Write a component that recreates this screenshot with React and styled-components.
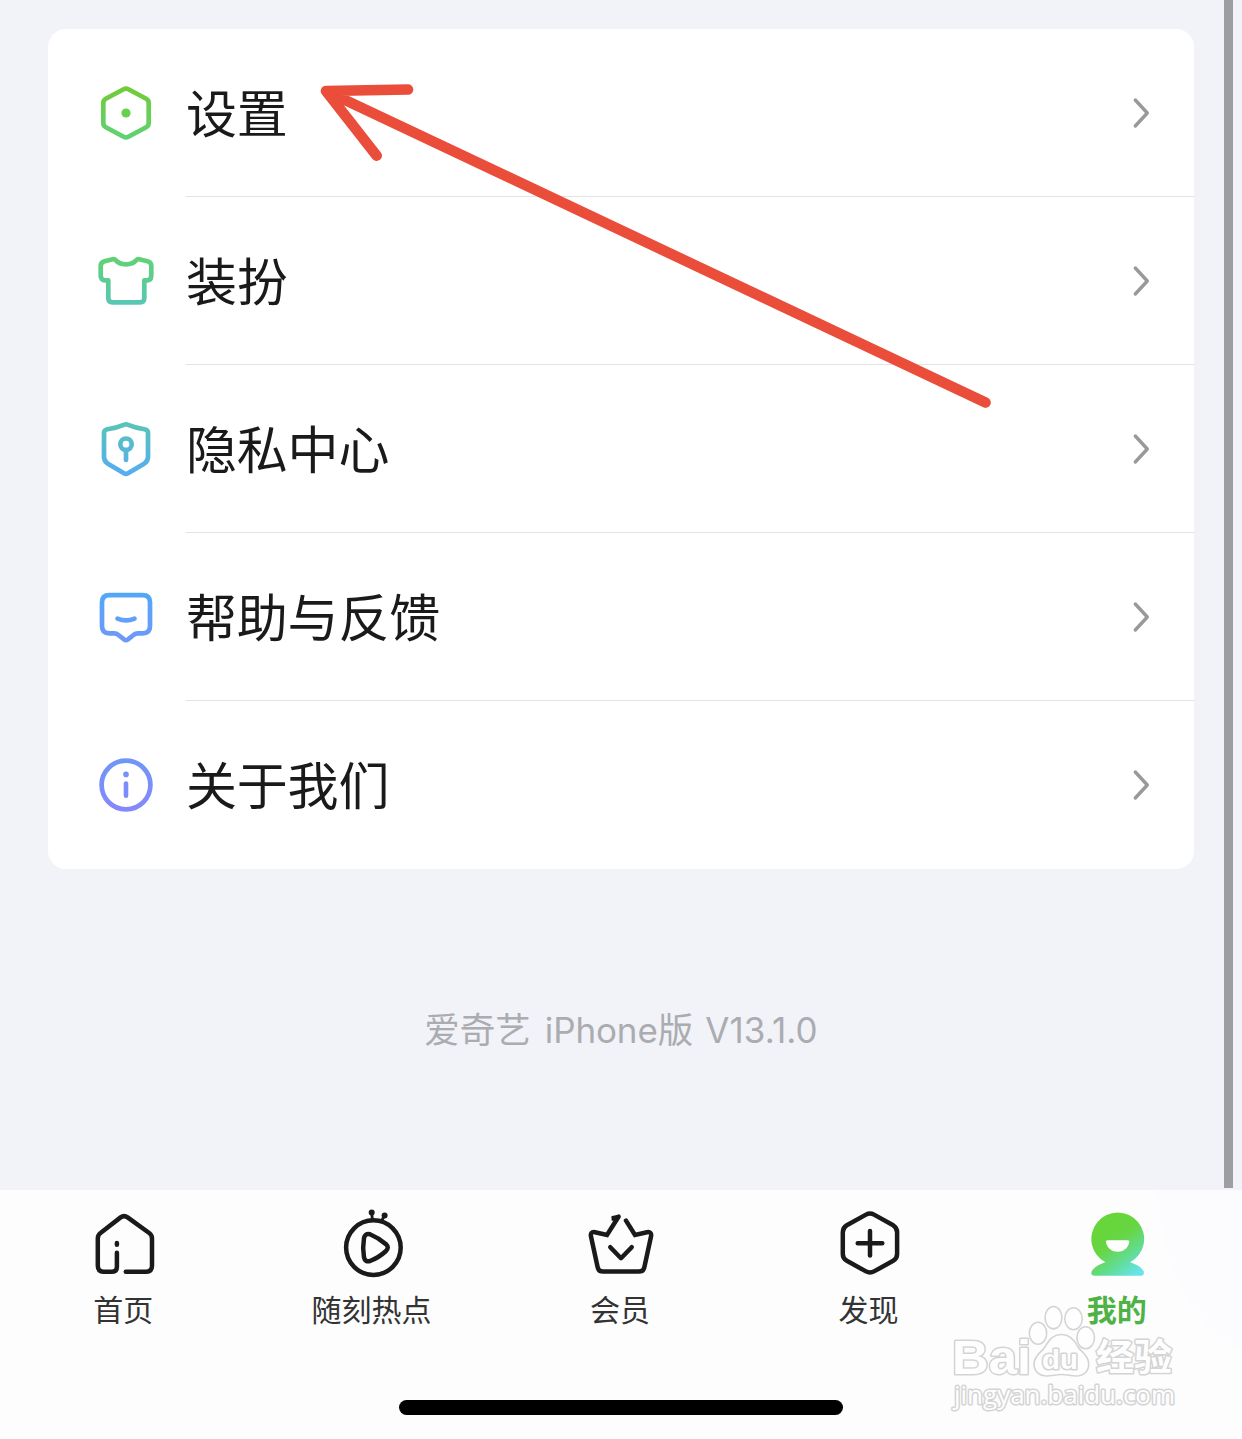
import styled, { createGlobalStyle } from 'styled-components'

export default function App() {
  return (
    <>
      <GlobalStyle />
      <Screen>
        <Content>
          <Card>
            {menuArray.map(({ label, icon, from, to }, index) => (
              <MenuRow key={label}>
                <MenuIcon viewBox='0 0 60 60'>
                  <defs>
                    <linearGradient id={`menu${index}`} gradientUnits='userSpaceOnUse' x1='0' y1='5' x2='0' y2='55'>
                      <stop offset='0' stopColor={from} />
                      <stop offset='1' stopColor={to} />
                    </linearGradient>
                  </defs>
                  <g stroke={`url(#menu${index})`}>{icon}</g>
                </MenuIcon>
                <MenuBody $last={index === menuArray.length - 1}>
                  <span>{label}</span>
                  <Chevron viewBox='0 0 20 34'>
                    <path d='M5.3 4 L17.3 17 L5.3 30' />
                  </Chevron>
                </MenuBody>
              </MenuRow>
            ))}
          </Card>
          <Version>
            <span>爱奇艺</span>
            <Latin $gap='14px' $spacing='-0.1px'>iPhone</Latin>
            <span>版</span>
            <Latin $gap='12px' $spacing='0.1px'>V13.1.0</Latin>
          </Version>
          <ScrollBar />
        </Content>
        <TabBar>
          <Tabs>
            {tabsArray.map(({ label, icon, active }) => (
              <Tab key={label} $active={active}>
                <TabIcon viewBox='0 0 72 72'>{icon}</TabIcon>
                <span>{label}</span>
              </Tab>
            ))}
          </Tabs>
          <HomeIndicator />
        </TabBar>
        <Arrow viewBox='0 0 700 350'>
          <path d='M16 16 L675.5 327.5 M98 14.5 L16 16 L66.7 80.7' />
        </Arrow>
        <Watermark viewBox='0 0 250 130'>
          <ellipse cx='98' cy='43.3' rx='8.7' ry='11' />
          <ellipse cx='113.5' cy='27.7' rx='8.4' ry='11.2' />
          <ellipse cx='133.5' cy='28.7' rx='8.7' ry='11' />
          <ellipse cx='145.7' cy='47.7' rx='8.8' ry='11' />
          <path d='M121.7 44.5 C130 44.5 135 51 138 57 C141 62 148.7 65 148.7 74 C148.7 82 143 86 136 86 C131 86 127 84.5 121.7 84.5 C116 84.5 112 86 107 86 C99 86 94 81 94 74 C94 65 102 62 105 57 C109 50 113 44.5 121.7 44.5 Z' />
          <Brand x='12' y='84' fontSize='49' textLength='79' lengthAdjust='spacingAndGlyphs'>Bai</Brand>
          <Brand x='102' y='79' fontSize='27' textLength='36' lengthAdjust='spacingAndGlyphs'>du</Brand>
          <text x='156' y='80.5' fontSize='37' fontWeight='700' textLength='76' lengthAdjust='spacingAndGlyphs'>经验</text>
          <text x='14' y='114' fontSize='25' textLength='221' lengthAdjust='spacingAndGlyphs'>jingyan.baidu.com</text>
        </Watermark>
      </Screen>
    </>
  )
}

//#region Data
const menuArray = [
  {
    label: '设置',
    from: '#72cb38',
    to: '#5fd274',
    icon: (
      <>
        <path d='M27.6 6.2 Q30 4.9 32.4 6.2 L50.2 15.8 Q52.7 17.2 52.7 20 V40 Q52.7 42.8 50.2 44.2 L32.4 53.8 Q30 55.1 27.6 53.8 L9.8 44.2 Q7.3 42.8 7.3 40 V20 Q7.3 17.2 9.8 15.8 Z' />
        <circle cx='30' cy='30' r='4.6' fill='#69cf4f' stroke='none' />
      </>
    )
  },
  {
    label: '装扮',
    from: '#60d272',
    to: '#58c6b8',
    icon: (
      <path d='M16.8 8.3 Q18.6 7.9 19.8 9.3 C24 14.6 36 14.6 40.2 9.3 Q41.4 7.9 43.2 8.3 L51.5 10.3 Q55.3 11.3 55.3 15 V24.5 Q55.3 29.4 51 29.4 H48.3 V47 Q48.3 51.3 44 51.3 H16.6 Q12.3 51.3 12.3 47 V29.4 H9 Q4.7 29.4 4.7 24.5 V15 Q4.7 11.3 8.5 10.3 Z' />
    )
  },
  {
    label: '隐私中心',
    from: '#58c4b8',
    to: '#55adf2',
    icon: (
      <>
        <path d='M28.5 5.6 Q30 4.9 31.5 5.6 Q39 8.8 48.5 10.2 Q52 10.8 52 14 V38 Q52 42 48.5 44.4 L32 54.3 Q30 55.6 28 54.3 L11.5 44.4 Q8 42 8 38 V14 Q8 10.8 11.5 10.2 Q21 8.8 28.5 5.6 Z' />
        <circle cx='30' cy='25.2' r='5.7' />
        <path d='M30 31 V41' />
      </>
    )
  },
  {
    label: '帮助与反馈',
    from: '#52a8f4',
    to: '#6e98fb',
    icon: (
      <>
        <path d='M13.3 8.2 H46.7 Q54 8.2 54 15.5 V39 Q54 46.3 46.7 46.3 H42 Q39.5 46.3 37.5 48 L32 52.4 Q30 53.8 28 52.4 L22.5 48 Q20.5 46.3 18 46.3 H13.3 Q6 46.3 6 39 V15.5 Q6 8.2 13.3 8.2 Z' />
        <path d='M21.5 31.6 Q30 35 38.5 31.6' />
      </>
    )
  },
  {
    label: '关于我们',
    from: '#6f96f8',
    to: '#8588fa',
    icon: (
      <>
        <circle cx='30' cy='30' r='24.4' />
        <circle cx='30' cy='19.4' r='2.8' fill='#7691f8' stroke='none' />
        <rect x='27.7' y='26.2' width='4.6' height='16.8' rx='2.3' fill='#7c8df9' stroke='none' />
      </>
    )
  }
]

const tabsArray = [
  {
    label: '首页',
    icon: (
      <>
        <path d='M28.9 44.8 V58.7 Q28.9 63.7 23.9 63.7 H15.8 Q9.8 63.7 9.8 57.7 V30.5 Q9.8 27 12.5 25 L32.6 9.4 Q36.1 6.8 39.6 9.4 L61.2 25 Q64 27 64 30.5 V57.7 Q64 63.7 58 63.7 H37.8' />
        <path d='M28.9 34.9 V36.8' />
      </>
    )
  },
  {
    label: '随刻热点',
    icon: (
      <>
        <circle cx='36.4' cy='39.6' r='27.3' />
        <path strokeWidth='2.8' d='M34.7 5 L35.4 12 M47.4 7.5 L44.6 13' />
        <circle cx='34.7' cy='4.4' r='3' fill='#1a1a1a' stroke='none' />
        <circle cx='47.6' cy='7.4' r='3' fill='#1a1a1a' stroke='none' />
        <path d='M27 30 Q28 25 33 26.2 Q42 30 49 36.2 Q52.5 39.6 49 43 Q42 49.5 33 53 Q28 54.3 27 49.3 Q25.4 39.6 27 30 Z' />
      </>
    )
  },
  {
    label: '会员',
    icon: (
      <>
        <path strokeLinejoin='miter' d='M33.5 8.8 L22 27 L10 24.2 Q5 23.4 6 28.6 L12.7 59.5 Q13.6 63.6 18 63.6 H54 Q58.4 63.6 59.3 59.5 L66 28.6 Q67 23.4 62 24.2 L50 27 L41 12.6' />
        <path fill='#1a1a1a' strokeWidth='1.6' d='M27.2 8.8 L34.6 7.2 L31 13.4 L29.8 11.6 L27.4 12 Z' />
        <path d='M25.3 39.2 L36 50.2 L46.7 39.2' />
      </>
    )
  },
  {
    label: '发现',
    icon: (
      <>
        <path d='M33 6.6 Q37 4.4 41 6.6 L60.2 17.3 Q64.1 19.7 64.1 24.2 V46 Q64.1 50.5 60.2 52.8 L41 63.4 Q37 65.6 33 63.4 L13.8 52.8 Q9.8 50.5 9.8 46 V24.2 Q9.8 19.7 13.8 17.3 Z' />
        <path d='M24.7 35.3 H49.3 M37 23 V47.6' />
      </>
    )
  },
  {
    label: '我的',
    active: true,
    icon: (
      <>
        <defs>
          <linearGradient id='me' gradientUnits='userSpaceOnUse' x1='24' y1='26' x2='54' y2='66'>
            <stop offset='0' stopColor='#67d53c' />
            <stop offset='0.25' stopColor='#67d646' />
            <stop offset='0.62' stopColor='#62dc92' />
            <stop offset='1' stopColor='#66e4ea' />
          </linearGradient>
        </defs>
        <path
          fill='url(#me)'
          stroke='none'
          d='M23.4 54.3 A26.4 26.4 0 1 1 48.1 54.3 C53.5 56 58.5 58.8 61.3 62.5 C62.7 65 61.5 67.7 59 67.7 H12.3 C9.5 67.7 8.5 65 10.1 62.5 C13 58.8 18 56 23.4 54.3 Z'
        />
        <path fill='#fff' stroke='none' d='M25.5 32.2 H45.7 Q47.5 32.2 47.3 34 C45 47 26.2 47 23.9 34 Q23.7 32.2 25.5 32.2 Z' />
      </>
    )
  }
]
//#endregion

//#region STYLED COMPONENTS
const GlobalStyle = createGlobalStyle`
  body {
    margin: 0;
    background: #f2f3f9;
    font-family: 'Noto Sans CJK SC', sans-serif;
  }
`

const Screen = styled.div`
  position: relative;
  width: 1242px;
  height: 1439px;
  overflow: hidden;
  display: flex;
  flex-direction: column;
`

const Content = styled.div`
  position: relative;
  height: 1190px;
  box-sizing: border-box;
  padding: 29px 48px 0;
  background: #f2f3f9;
`

const Card = styled.div`
  background: #fff;
  border-radius: 18px;
  height: 840px;
`

const MenuRow = styled.div`
  display: flex;
  align-items: center;
  height: 168px;
  padding-left: 48px;
`

const MenuIcon = styled.svg`
  width: 60px;
  height: 60px;
  margin-right: 30px;
  flex-shrink: 0;
  fill: none;
  stroke-width: 4.7;
  stroke-linecap: round;
  stroke-linejoin: round;
`

const MenuBody = styled.div`
  flex: 1;
  height: 168px;
  box-sizing: border-box;
  display: flex;
  align-items: center;
  justify-content: space-between;
  padding-right: 44px;
  border-bottom: 1px solid ${({ $last }) => ($last ? 'transparent' : '#e1e2e4')};
  color: #1a1a1a;
  font-size: 51px;
  line-height: 74px;
  letter-spacing: -0.2px;
  span {
    padding-bottom: 4px;
  }
`

const Chevron = styled.svg`
  width: 20px;
  height: 34px;
  fill: none;
  stroke: #999;
  stroke-width: 3.4;
  stroke-linecap: round;
  stroke-linejoin: round;
`

const Version = styled.div`
  display: flex;
  justify-content: center;
  align-items: baseline;
  margin-top: 132px;
  font-size: 35.5px;
  line-height: 54px;
  color: #abacb0;
`

const Latin = styled.span`
  margin-left: ${({ $gap }) => $gap};
  font-family: Inter, sans-serif;
  font-weight: 400;
  font-size: 35px;
  letter-spacing: ${({ $spacing }) => $spacing};
`

const ScrollBar = styled.div`
  position: absolute;
  top: 0;
  right: 9px;
  width: 9px;
  height: 1188px;
  background: #9d9ea2;
`

const TabBar = styled.div`
  flex: 1;
  display: flex;
  flex-direction: column;
  align-items: center;
  background: radial-gradient(132px 174px at 1290px 0, #fcfcfe 99.5%, #fdfdfe 100%);
`

const Tabs = styled.div`
  display: flex;
  width: 100%;
  height: 210px;
`

const Tab = styled.div`
  flex: 1;
  display: flex;
  flex-direction: column;
  align-items: center;
  padding-top: 18px;
  color: ${({ $active }) => ($active ? '#4fb245' : '#333')};
  font-size: 30px;
  font-weight: ${({ $active }) => ($active ? 700 : 400)};
  line-height: 44px;
  span {
    margin-top: 6px;
    margin-right: 2px;
  }
`

const TabIcon = styled.svg`
  width: 72px;
  height: 72px;
  fill: none;
  stroke: #1a1a1a;
  stroke-width: 4.5;
  stroke-linecap: round;
  stroke-linejoin: round;
`

const HomeIndicator = styled.div`
  width: 444px;
  height: 15px;
  border-radius: 8px;
  background: #000;
`

const Arrow = styled.svg`
  position: absolute;
  left: 310px;
  top: 75px;
  width: 700px;
  height: 350px;
  fill: none;
  stroke: #ea4d3a;
  stroke-width: 10.6;
  stroke-linecap: round;
  stroke-linejoin: round;
`

const Watermark = styled.svg`
  position: absolute;
  left: 940px;
  top: 1290px;
  width: 250px;
  height: 130px;
  font-family: 'Open Sans', 'Noto Sans CJK SC', sans-serif;
  fill: #fefefe;
  stroke: #d4d4d4;
  stroke-width: 1.6;
  stroke-linejoin: round;
  text {
    stroke-width: 3;
    paint-order: stroke;
  }
`

const Brand = styled.text`
  font-family: 'Liberation Sans', sans-serif;
  font-weight: 700;
`
//#endregion
